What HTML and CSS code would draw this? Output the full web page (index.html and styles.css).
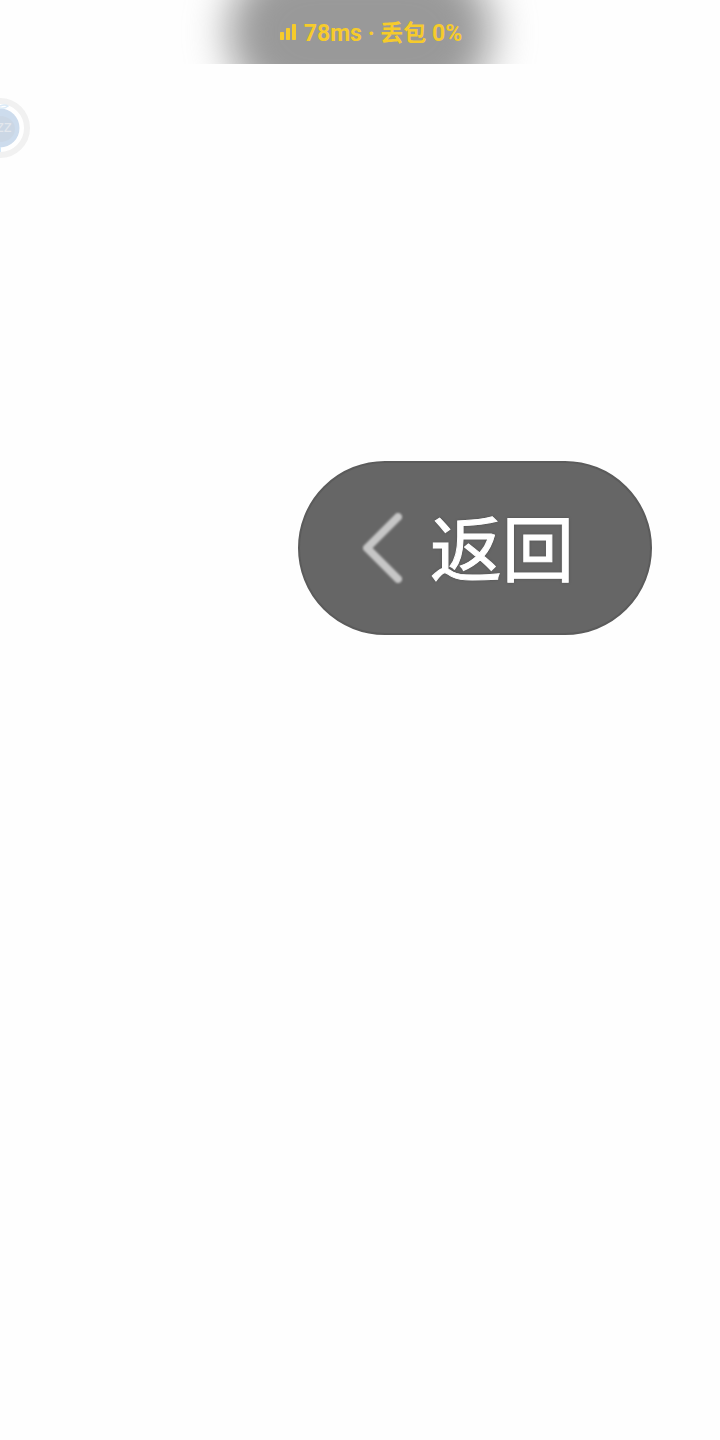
FILE: index.html
```html
<!DOCTYPE html>
<html lang="zh-CN">
<head>
<meta charset="utf-8">
<meta name="viewport" content="width=device-width, initial-scale=1">
<title>返回</title>
<link rel="stylesheet" href="styles.css">
</head>
<body>
<header class="network">
  <div class="network-glow"></div>
  <div class="network-status">
    <svg class="signal" viewBox="0 0 16 16" aria-hidden="true">
      <rect x="0" y="8" width="4" height="8" rx="0.7"/>
      <rect x="6" y="4" width="4" height="12" rx="0.7"/>
      <rect x="12" y="0" width="4" height="16" rx="0.7"/>
    </svg>
    <span class="network-text">78ms · 丢包 0%</span>
  </div>
</header>
<button class="floating" type="button" aria-label="悬浮球">
  <svg class="floating-art" viewBox="0 0 30 60" aria-hidden="true">
    <circle cx="0" cy="30" r="27" fill="#fff" stroke="#f1f1f1" stroke-width="6"/>
    <circle cx="0" cy="30" r="19.5" fill="#cddced"/>
    <ellipse cx="0" cy="31" rx="15" ry="13" fill="#cbd7e5"/>
    <path d="M0 8Q5 6 8 8Q5 11 0 10" fill="none" stroke="#dcebf7" stroke-width="1.5"/>
    <path d="M0 49V54" stroke="#d5e8f7" stroke-width="2"/>
    <text class="floating-label" x="-4" y="34">zz</text>
  </svg>
</button>
<main class="page">
  <button class="back" type="button">
    <svg class="chevron" viewBox="0 0 44 76" aria-hidden="true">
      <path d="M38 7L7 38L38 69" fill="none" stroke="#c6c6c6" stroke-width="8" stroke-linecap="round" stroke-linejoin="round"/>
    </svg>
    <span class="back-text">返回</span>
  </button>
</main>
</body>
</html>
```
FILE: styles.css
```css
* {
  box-sizing: border-box;
}

body {
  margin: 0;
  background: #fefefe;
  font-family: Roboto, "Noto Sans CJK SC", sans-serif;
}

button {
  border: 0;
  padding: 0;
  font: inherit;
  cursor: pointer;
}

.network {
  position: relative;
  display: flex;
  justify-content: center;
  align-items: center;
  height: 64px;
  padding-left: 22px;
  overflow: hidden;
}

.network-glow {
  position: absolute;
  inset: -44px 0;
  width: 264px;
  margin: 0 auto;
  border-radius: 76px;
  background: #999;
  filter: blur(20px);
}

.network-status {
  position: relative;
  display: flex;
  align-items: center;
  gap: 8px;
  color: #f6cb2b;
  font-size: 23px;
  font-weight: 700;
  line-height: 32px;
  white-space: nowrap;
}

.network-text {
  padding-top: 4px;
}

.signal {
  width: 16px;
  height: 16px;
  fill: currentColor;
}

.floating {
  position: absolute;
  top: 98px;
  left: 0;
  background: none;
}

.floating-art {
  display: block;
  width: 30px;
  height: 60px;
}

.floating-label {
  fill: #e3e7ed;
  font-family: "DejaVu Sans", sans-serif;
  font-size: 15px;
}

.page {
  display: flex;
  justify-content: flex-end;
  padding: 397px 68px 0;
}

.back {
  display: flex;
  align-items: center;
  gap: 26px;
  padding: 29px 76px 29px 60px;
  border: 2px solid #5b5b5b;
  border-radius: 87px;
  background: #666;
  color: #fff;
  font-size: 72px;
  line-height: 104px;
  text-shadow: 0 0 3px #444;
}

.back-text {
  padding-top: 8px;
  -webkit-text-stroke: 1px #fff;
}

.chevron {
  width: 44px;
  height: 76px;
  filter: blur(1px);
}
```
